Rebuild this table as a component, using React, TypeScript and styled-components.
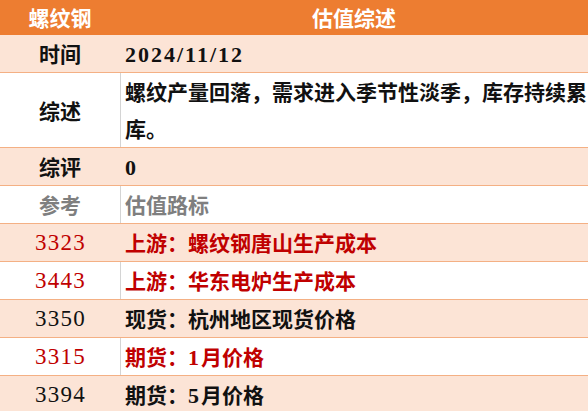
import React from "react";
import styled, { createGlobalStyle } from "styled-components";

const Global = createGlobalStyle`
  html, body { margin: 0; padding: 0; overflow: hidden; background: #ffffff; }
  body { font-family: "Noto Sans CJK SC", sans-serif; }
`;

const Table = styled.div`
  width: 588px;
  display: flex;
  flex-direction: column;
`;

const HeaderRow = styled.div`
  display: grid;
  grid-template-columns: 120px 1fr;
  height: 35px;
  background: #ed7d31;
  color: #ffffff;
  font-family: "Noto Sans CJK SC", sans-serif;
  font-weight: 700;
  font-size: 21px;
  line-height: 35px;
  text-align: center;
`;

const HeaderCell = styled.div`
  white-space: nowrap;
`;

type Tone = "black" | "red" | "grey";

const Row = styled.div<{ $shaded: boolean; $lines: number }>`
  display: grid;
  grid-template-columns: 120px 1fr;
  height: ${(p) => p.$lines * 37}px;
  background: ${(p) => (p.$shaded ? "#fce4d6" : "#ffffff")};
  border-bottom: 1px solid #f4b084;
  flex-shrink: 0;
`;

const toneColor = (t: Tone) =>
  t === "red" ? "#c00000" : t === "grey" ? "#7f7f7f" : "#111111";

const LabelCell = styled.div<{ $tone: Tone; $num?: boolean }>`
  display: flex;
  align-items: center;
  justify-content: center;
  color: ${(p) => toneColor(p.$tone)};
  font-family: ${(p) =>
    p.$num ? '"Liberation Serif", serif' : '"Noto Sans CJK SC", sans-serif'};
  font-weight: ${(p) => (p.$num ? 400 : 700)};
  font-size: ${(p) => (p.$num ? "23px" : "21px")};
  letter-spacing: ${(p) => (p.$num ? "1.2px" : "0")};
  line-height: 37px;
  padding-left: ${(p) => (p.$num ? "1px" : "0")};
`;

const ValueCell = styled.div<{ $tone: Tone; $divider: boolean }>`
  border-left: 1px solid ${(p) => (p.$divider ? "#d4d4d4" : "transparent")};
  padding-left: 4px;
  color: ${(p) => toneColor(p.$tone)};
  font-family: "Noto Sans CJK SC", sans-serif;
  font-weight: 700;
  font-size: 21px;
  line-height: 37px;
  word-break: break-all;
  overflow: hidden;
`;

const Num = styled.span`
  font-family: "Liberation Serif", serif;
  font-weight: 700;
  font-size: 22px;
  letter-spacing: 2px;
`;

type RowData = {
  label: string;
  labelNum?: boolean;
  value: React.ReactNode;
  tone: Tone;
  lines?: number;
};

const rows: RowData[] = [
  { label: "时间", value: <Num>2024/11/12</Num>, tone: "black" },
  {
    label: "综述",
    value: "螺纹产量回落，需求进入季节性淡季，库存持续累库。",
    tone: "black",
    lines: 2,
  },
  { label: "综评", value: <Num>0</Num>, tone: "black" },
  { label: "参考", value: "估值路标", tone: "grey" },
  { label: "3323", labelNum: true, value: "上游：螺纹钢唐山生产成本", tone: "red" },
  { label: "3443", labelNum: true, value: "上游：华东电炉生产成本", tone: "red" },
  { label: "3350", labelNum: true, value: "现货：杭州地区现货价格", tone: "black" },
  {
    label: "3315",
    labelNum: true,
    value: (
      <>
        期货：<Num>1</Num>月价格
      </>
    ),
    tone: "red",
  },
  {
    label: "3394",
    labelNum: true,
    value: (
      <>
        期货：<Num>5</Num>月价格
      </>
    ),
    tone: "black",
  },
];

export default function App() {
  return (
    <>
      <Global />
      <Table>
        <HeaderRow>
          <HeaderCell>螺纹钢</HeaderCell>
          <HeaderCell>估值综述</HeaderCell>
        </HeaderRow>
        {rows.map((r, i) => {
          const shaded = i % 2 === 0;
          return (
            <Row key={i} $shaded={shaded} $lines={r.lines ?? 1}>
              <LabelCell $tone={r.tone} $num={r.labelNum}>
                {r.label}
              </LabelCell>
              <ValueCell $tone={r.tone} $divider={!shaded}>
                {r.value}
              </ValueCell>
            </Row>
          );
        })}
      </Table>
    </>
  );
}
